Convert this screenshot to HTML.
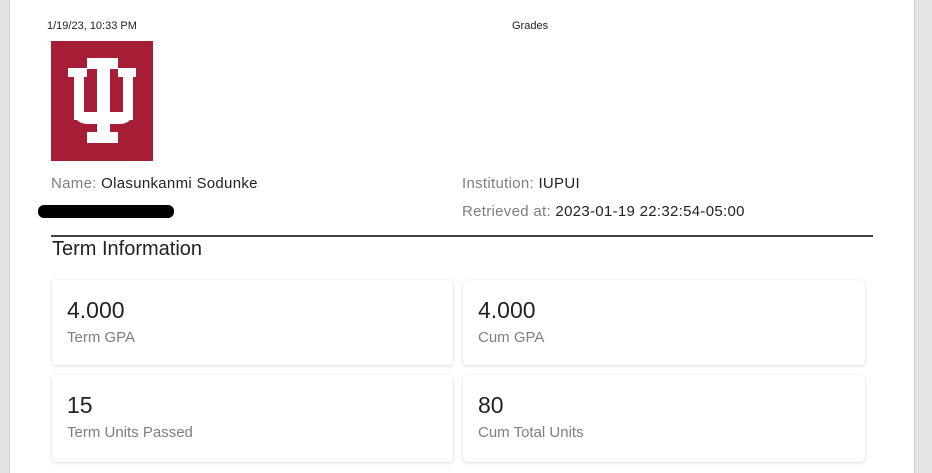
<!DOCTYPE html>
<html><head><meta charset="utf-8"><style>
body{margin:0;width:932px;height:473px;background:#fff;font-family:"Liberation Sans",Arial,sans-serif;position:relative;overflow:hidden}
.l{position:absolute;left:0;top:0;width:9px;height:473px;background:#e2e2e2;border-right:1px solid #d4d4d4}
.r{position:absolute;left:914px;top:0;width:18px;height:473px;background:#e4e4e4;border-left:1px solid #d0d0d0}
.t{position:absolute;white-space:nowrap}
.g{color:#7a7f86}
.card{position:absolute;background:#fff;border-radius:4px;box-shadow:0 1px 3px rgba(0,0,0,.14),0 0 1px rgba(0,0,0,.08)}
.v{position:absolute;left:15px;top:17px;font-size:23px;color:#222}
.k{position:absolute;left:15px;top:49px;font-size:15px;color:#7a7f86}
</style></head><body>
<div class="l"></div><div class="r"></div>
<div class="t" style="left:47px;top:20px;font-size:11px;color:#222">1/19/23, 10:33 PM</div>
<div class="t" style="left:512px;top:20px;font-size:11px;color:#222">Grades</div>
<svg style="position:absolute;left:0;top:0" width="200" height="170">
<rect x="51" y="41" width="102" height="120" fill="#a51e36"/>
<g fill="#fff">
<rect x="87" y="58" width="31" height="11"/>
<rect x="97" y="58" width="13" height="85"/>
<rect x="87" y="132" width="31" height="11"/>
<rect x="68" y="68" width="19" height="9"/>
<rect x="74" y="68" width="10" height="52"/>
<rect x="118" y="68" width="18" height="9"/>
<rect x="123" y="68" width="10" height="52"/>
<path d="M74 110 Q74 124 88 124 L119 124 Q133 124 133 110 L133 104 L123 104 L123 112 L84 112 L84 104 L74 104Z"/>
</g>
</svg>
<div class="t" style="left:51px;top:175px;font-size:15px;color:#222;letter-spacing:.3px"><span class="g">Name:</span> Olasunkanmi Sodunke</div>
<div style="position:absolute;left:38px;top:205px;width:136px;height:13px;background:#000;border-radius:6px"></div>
<div class="t" style="left:462px;top:175px;font-size:15px;color:#222;letter-spacing:.3px"><span class="g">Institution:</span> IUPUI</div>
<div class="t" style="left:462px;top:203px;font-size:15px;color:#222;letter-spacing:.3px"><span class="g">Retrieved at:</span> 2023-01-19 22:32:54-05:00</div>
<div style="position:absolute;left:51px;top:235px;width:822px;height:2px;background:#444"></div>
<div class="t" style="left:52px;top:238px;font-size:20px;color:#222">Term Information</div>
<div class="card" style="left:52px;top:280px;width:401px;height:85px"><div class="v">4.000</div><div class="k">Term GPA</div></div>
<div class="card" style="left:463px;top:280px;width:402px;height:85px"><div class="v">4.000</div><div class="k">Cum GPA</div></div>
<div class="card" style="left:52px;top:375px;width:401px;height:87px"><div class="v">15</div><div class="k">Term Units Passed</div></div>
<div class="card" style="left:463px;top:375px;width:402px;height:87px"><div class="v">80</div><div class="k">Cum Total Units</div></div>
</body></html>
